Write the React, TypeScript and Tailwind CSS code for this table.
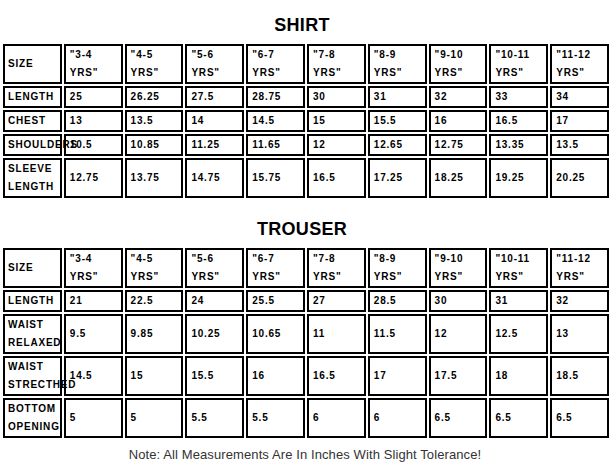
import React from 'react';

type Table = {
  title: string;
  rows: { label: string[]; values: string[] }[];
};

const sizes = ['3-4', '4-5', '5-6', '6-7', '7-8', '8-9', '9-10', '10-11', '11-12'];

const tables: Table[] = [
  {
    title: 'SHIRT',
    rows: [
      { label: ['LENGTH'], values: ['25', '26.25', '27.5', '28.75', '30', '31', '32', '33', '34'] },
      { label: ['CHEST'], values: ['13', '13.5', '14', '14.5', '15', '15.5', '16', '16.5', '17'] },
      { label: ['SHOULDERS'], values: ['10.5', '10.85', '11.25', '11.65', '12', '12.65', '12.75', '13.35', '13.5'] },
      { label: ['SLEEVE', 'LENGTH'], values: ['12.75', '13.75', '14.75', '15.75', '16.5', '17.25', '18.25', '19.25', '20.25'] },
    ],
  },
  {
    title: 'TROUSER',
    rows: [
      { label: ['LENGTH'], values: ['21', '22.5', '24', '25.5', '27', '28.5', '30', '31', '32'] },
      { label: ['WAIST', 'RELAXED'], values: ['9.5', '9.85', '10.25', '10.65', '11', '11.5', '12', '12.5', '13'] },
      { label: ['WAIST', 'STRECTHED'], values: ['14.5', '15', '15.5', '16', '16.5', '17', '17.5', '18', '18.5'] },
      { label: ['BOTTOM', 'OPENING'], values: ['5', '5', '5.5', '5.5', '6', '6', '6.5', '6.5', '6.5'] },
    ],
  },
];

const cell = 'border-2 border-black px-[4px] align-middle text-left whitespace-nowrap';

const SizeTable = ({ title, rows }: Table) => (
  <div>
    <h2 className="text-center pr-[10px] text-[18px] leading-[20px] font-bold tracking-[0.3px] text-black mb-[7px]">{title}</h2>
    <table className="ml-[1px] w-[610px] table-fixed border-separate border-spacing-[2px] text-[10px] leading-[18px] font-bold tracking-[0.8px] text-black">
      <tbody>
        <tr>
          <td className={`${cell} pl-[3px]`}>SIZE</td>
          {sizes.map((s) => (
            <td key={s} className={cell}>
              "{s}
              <br />
              YRS"
            </td>
          ))}
        </tr>
        {rows.map((r) => (
          <tr key={r.label.join(' ')}>
            <td className={`${cell} pl-[3px]`}>
              {r.label.map((l, i) => (
                <React.Fragment key={l}>
                  {i > 0 && <br />}
                  {l}
                </React.Fragment>
              ))}
            </td>
            {r.values.map((v, i) => (
              <td key={i} className={cell}>{v}</td>
            ))}
          </tr>
        ))}
      </tbody>
    </table>
  </div>
);

export default function App() {
  return (
    <div className="w-[614px] h-[467px] bg-white font-['Liberation_Sans',Arial,sans-serif] pt-[15px]">
      <SizeTable {...tables[0]} />
      <div className="mt-[19px]">
        <SizeTable {...tables[1]} />
      </div>
      <p className="mt-[7px] pr-[4px] text-center text-[13px] leading-[15px] tracking-[0.1px] text-[#333]">
        Note: All Measurements Are In Inches With Slight Tolerance!
      </p>
    </div>
  );
}
